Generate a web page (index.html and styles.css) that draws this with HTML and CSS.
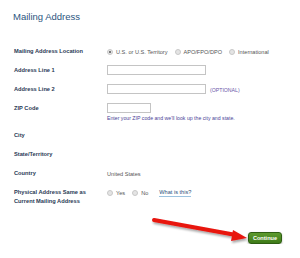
FILE: index.html
```html
<!DOCTYPE html>
<html lang="en">
<head>
  <meta charset="UTF-8" />
  <title>Mailing Address</title>
  <link rel="stylesheet" href="styles.css">
</head>
<body>

<div class="page">
  <h1 class="title">Mailing Address</h1>

  <div class="form">
    <div class="row">
      <div class="label">Mailing Address Location</div>
      <div class="field">
        <span class="radio checked"></span><span class="opt">U.S. or U.S. Territory</span>
        <span class="radio"></span><span class="opt">APO/FPO/DPO</span>
        <span class="radio"></span><span class="opt">International</span>
      </div>
    </div>

    <div class="row">
      <div class="label">Address Line 1</div>
      <div class="field"><input class="text long" type="text"></div>
    </div>

    <div class="row">
      <div class="label">Address Line 2</div>
      <div class="field"><input class="text long" type="text"><span class="optional">(OPTIONAL)</span></div>
    </div>

    <div class="row zip">
      <div class="label">ZIP Code</div>
      <div class="field column">
        <input class="text short" type="text">
        <span class="hint">Enter your ZIP code and we'll look up the city and state.</span>
      </div>
    </div>

    <div class="row">
      <div class="label">City</div>
      <div class="field"></div>
    </div>

    <div class="row">
      <div class="label">State/Territory</div>
      <div class="field"></div>
    </div>

    <div class="row">
      <div class="label">Country</div>
      <div class="field value">United States</div>
    </div>

    <div class="row tall">
      <div class="label">Physical Address Same as<br>Current Mailing Address</div>
      <div class="field top">
        <span class="radio"></span><span class="opt">Yes</span>
        <span class="radio"></span><span class="opt">No</span>
        <a class="help" href="#">What is this?</a>
      </div>
    </div>
  </div>

  <div class="actions">
    <button class="continue">Continue</button>
  </div>
</div>

<svg class="arrow" width="300" height="258" viewBox="0 0 300 258">
  <defs>
    <filter id="shadow" x="-10%" y="-50%" width="120%" height="200%">
      <feDropShadow dx="1" dy="2" stdDeviation="1.2" flood-color="#000" flood-opacity="0.35"/>
    </filter>
  </defs>
  <g filter="url(#shadow)">
    <line x1="154" y1="220" x2="236" y2="235" stroke="#e8140f" stroke-width="4" stroke-linecap="round"/>
    <polygon points="247,238 233,230 231,241" fill="#e8140f"/>
  </g>
</svg>

</body>
</html>
```

FILE: styles.css
```css
body {
  margin: 0;
  background: #fff;
  font-family: "Liberation Sans", Arial, sans-serif;
  color: #333;
}

.page {
  padding: 11px 14px 0 14px;
}

.title {
  margin: 0 0 0 -1px;
  font-size: 9.5px;
  font-weight: normal;
  color: #2b5580;
  line-height: 11px;
}

.form {
  margin-top: 25px;
}

.row {
  display: grid;
  grid-template-columns: 93px 1fr;
  height: 19px;
  align-items: start;
}

.row.zip {
  height: 27px;
}

.row.tall {
  height: 36px;
}

.label {
  font-size: 5.7px;
  font-weight: bold;
  color: #2a3a55;
  line-height: 9px;
}

.field {
  display: flex;
  align-items: center;
  font-size: 5.6px;
  color: #555;
  height: 9px;
}

.field.column {
  flex-direction: column;
  align-items: flex-start;
  height: auto;
}

.radio {
  display: inline-block;
  width: 6px;
  height: 6px;
  border-radius: 50%;
  background: #e4e4e4;
  border: 1px solid #c8c8c8;
  box-sizing: border-box;
  margin-right: 3px;
  position: relative;
}

.radio.checked::after {
  content: "";
  position: absolute;
  left: 1px;
  top: 1px;
  width: 2px;
  height: 2px;
  border-radius: 50%;
  background: #555;
}

.opt {
  margin-right: 7px;
  color: #555;
}

.text {
  box-sizing: border-box;
  height: 10px;
  margin: -1px 0 0 0;
  padding: 0;
  border: 1px solid #c4c4c4;
  background: #fff;
}

.text.long {
  width: 99px;
}

.text.short {
  width: 44px;
}

.optional {
  margin-left: 4px;
  color: #6a57a8;
  font-size: 5.2px;
}

.hint {
  margin-top: 2px;
  color: #4a3f98;
  font-size: 5.2px;
}

.help {
  margin-left: 4px;
  color: #2b4f7a;
  text-decoration: none;
  border-bottom: 1px solid #9cc3e0;
  line-height: 7px;
}

.actions {
  display: flex;
  justify-content: flex-end;
  padding-right: 4px;
  margin-top: 8px;
}

.continue {
  width: 34px;
  height: 12px;
  padding: 0;
  border: 1px solid #2e5e12;
  border-radius: 3px;
  background: linear-gradient(#5d9a2e, #3e7a18);
  color: #fff;
  font-family: "Liberation Sans", Arial, sans-serif;
  font-size: 5.6px;
  font-weight: bold;
  box-shadow: 0 1px 2px rgba(0, 0, 0, 0.3);
}

.arrow {
  position: absolute;
  left: 0;
  top: 0;
  pointer-events: none;
}
```
